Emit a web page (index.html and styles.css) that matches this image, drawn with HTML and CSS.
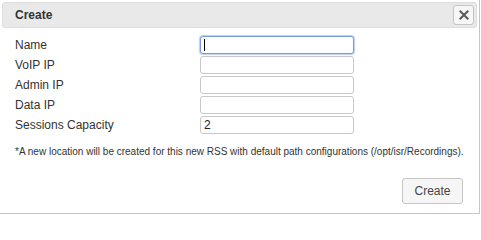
FILE: index.html
```html
<!DOCTYPE html>
<html lang="en">
<head>
<meta charset="utf-8">
<title>Create</title>
<link rel="stylesheet" href="styles.css">
</head>
<body>
<div class="dialog">
  <div class="titlebar">
    <span class="title">Create</span>
    <button class="close" type="button" title="Close">
      <svg width="10" height="10" viewBox="0 0 10 10" aria-hidden="true">
        <path d="M1.5 1.5 L8.5 8.5 M8.5 1.5 L1.5 8.5" stroke="#5c5c5c" stroke-width="2.1" stroke-linecap="square" fill="none"/>
      </svg>
    </button>
  </div>
  <div class="content">
    <div class="form">
      <label class="label" for="f-name">Name</label>
      <div class="field">
        <input id="f-name" class="input focused" type="text" value="">
        <span class="caret"></span>
      </div>
      <label class="label" for="f-voip">VoIP IP</label>
      <div class="field"><input id="f-voip" class="input" type="text" value=""></div>
      <label class="label" for="f-admin">Admin IP</label>
      <div class="field"><input id="f-admin" class="input" type="text" value=""></div>
      <label class="label" for="f-data">Data IP</label>
      <div class="field"><input id="f-data" class="input" type="text" value=""></div>
      <label class="label" for="f-cap">Sessions Capacity</label>
      <div class="field"><input id="f-cap" class="input" type="text" value="2"></div>
    </div>
    <p class="note">*A new location will be created for this new RSS with default path configurations (/opt/isr/Recordings).</p>
  </div>
  <div class="buttonpane">
    <button class="btn" type="button">Create</button>
  </div>
</div>
</body>
</html>
```

FILE: styles.css
```css
html, body {
  margin: 0;
  padding: 0;
  background: #ffffff;
}

body {
  font-family: "Liberation Sans", Arial, Helvetica, sans-serif;
  font-size: 12px;
  color: #333333;
}

.dialog {
  box-sizing: border-box;
  width: 480px;
  height: 214px;
  padding: 2px 2px 0 2px;
  border-right: 1px solid #c5c5c5;
  border-bottom: 1px solid #c5c5c5;
  display: flex;
  flex-direction: column;
  background: #ffffff;
}

.titlebar {
  box-sizing: border-box;
  height: 26px;
  display: flex;
  align-items: center;
  padding: 0 2px 0 12px;
  background: #e9e9e9;
  border: 1px solid #dddddd;
  border-radius: 3px;
}

.title {
  font-weight: bold;
  color: #333333;
  line-height: 14px;
}

.close {
  box-sizing: border-box;
  margin-left: auto;
  width: 21px;
  height: 20px;
  padding: 0;
  display: flex;
  align-items: center;
  justify-content: center;
  background: #f6f6f6;
  border: 1px solid #c5c5c5;
  border-radius: 3px;
}

.content {
  padding: 8px 13px 0 13px;
}

.form {
  display: grid;
  grid-template-columns: 185px 154px;
  grid-auto-rows: 18px;
  row-gap: 2px;
  align-items: center;
}

.label {
  line-height: 14px;
  color: #333333;
}

.field {
  position: relative;
  height: 18px;
}

.input {
  box-sizing: border-box;
  display: block;
  width: 154px;
  height: 18px;
  margin: 0;
  padding: 0 3px;
  border: 1px solid #c8c8c8;
  border-radius: 3px;
  font-family: "Liberation Sans", Arial, Helvetica, sans-serif;
  font-size: 12px;
  color: #222222;
  background: #ffffff;
  outline: none;
}

.input.focused {
  border-color: #7a9cdb;
  box-shadow: 0 0 1px 1px rgba(130, 165, 230, 0.55);
}

.caret {
  position: absolute;
  left: 4px;
  top: 3px;
  width: 1px;
  height: 12px;
  background: #000000;
}

.note {
  margin: 12px 0 0 0;
  font-size: 10px;
  line-height: 12px;
  color: #333333;
}

.buttonpane {
  margin-top: auto;
  display: flex;
  justify-content: flex-end;
  padding: 0 14px 9px 0;
}

.btn {
  box-sizing: border-box;
  height: 26px;
  padding: 0 11.5px;
  font-family: "Liberation Sans", Arial, Helvetica, sans-serif;
  font-size: 12px;
  line-height: 14px;
  color: #454545;
  background: #f6f6f6;
  border: 1px solid #c5c5c5;
  border-radius: 3px;
}
```
